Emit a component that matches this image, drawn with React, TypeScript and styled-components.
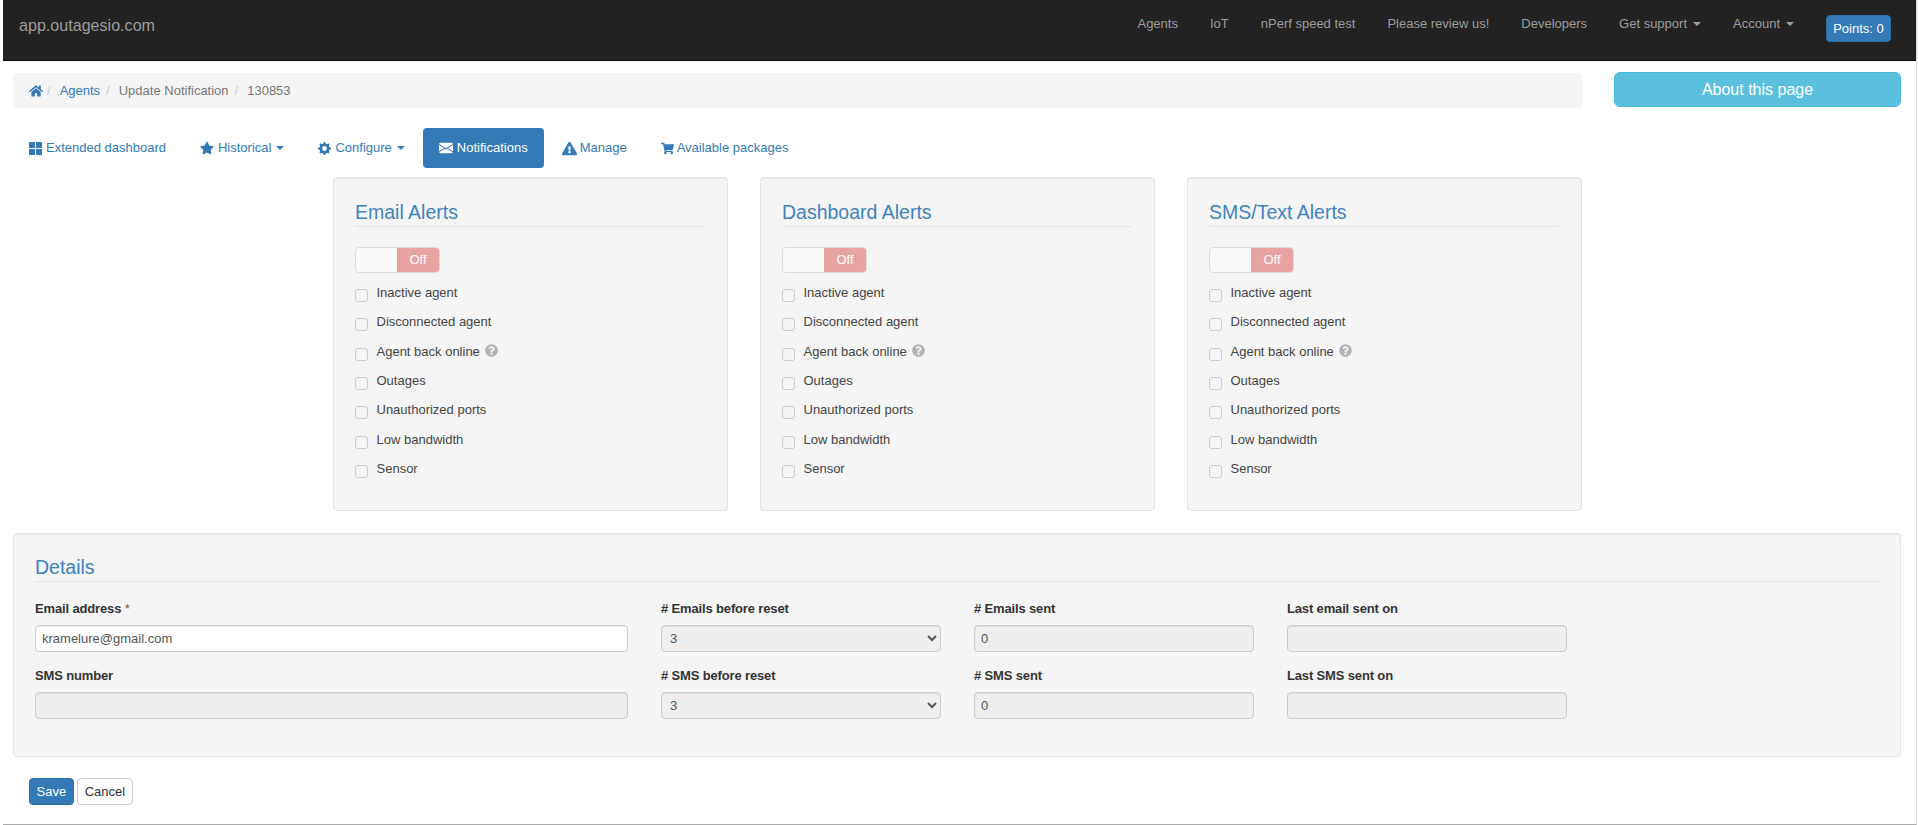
import { FC, ReactNode } from 'react'
import styled, { createGlobalStyle } from 'styled-components'
import { BsEnvelopeFill, BsGearFill } from 'react-icons/bs'
import { FaExclamationTriangle, FaHome, FaQuestionCircle, FaShoppingCart, FaStar } from 'react-icons/fa'

const blue = '#337ab7'

const GlobalStyle = createGlobalStyle`
    html, body {
        margin: 0;
        padding: 0;
        background: #fff;
    }
    body {
        font-family: "Liberation Sans", Arial, sans-serif;
        font-size: 13px;
        line-height: 18px;
        color: #333;
    }
    * {
        box-sizing: border-box;
    }
`

const Page = styled.div`
    margin-left: 3px;
    height: 825px;
    width: 1914px;
    border-right: 1px solid #d8d8d8;
    border-bottom: 1px solid #aaa;
    overflow: hidden;
`

const Navbar = styled.nav`
    height: 61px;
    background: #222;
    border-bottom: 1px solid #080808;
    display: flex;
    align-items: flex-start;
    justify-content: space-between;
    padding: 0 25px 0 16px;
`

const Brand = styled.div`
    color: #9d9d9d;
    font-size: 16.1px;
    line-height: 20px;
    margin-top: 15px;
`

const NavLinks = styled.div`
    display: flex;
    align-items: flex-start;
`

const NavLink = styled.div`
    color: #9d9d9d;
    padding: 15px 16px 0;
    display: flex;
    align-items: center;
    white-space: nowrap;
`

const Caret = styled.span`
    display: inline-block;
    margin-left: 6px;
    border-top: 4px solid currentColor;
    border-left: 4px solid transparent;
    border-right: 4px solid transparent;
`

const Points = styled.div`
    margin: 15px 0 0 16px;
    width: 65px;
    height: 27px;
    text-align: center;
    background: ${blue};
    border: 1px solid #2e6da4;
    border-radius: 4px;
    color: #fff;
    line-height: 25px;
    white-space: nowrap;
`

const Main = styled.main`
    padding: 12px 15px 0 10px;
`

const TopRow = styled.div`
    display: flex;
    justify-content: space-between;
    align-items: flex-start;
`

const Breadcrumb = styled.ol`
    list-style: none;
    width: 1569px;
    height: 35px;
    margin: 0;
    padding: 0 16px;
    background: #f5f5f5;
    border-radius: 4px;
    display: flex;
    align-items: center;
`

interface iCrumb {
    link?: boolean;
}

const Crumb = styled.li<iCrumb>`
    display: flex;
    align-items: center;
    color: ${props => props.link ? blue : '#777'};
    &:not(:last-child)::after {
        content: '/';
        color: #ccc;
        margin: 0 9px 0 6px;
    }
    &:first-child::after {
        margin-left: 4px;
    }
`

const AboutButton = styled.button`
    width: 287px;
    height: 35px;
    margin-top: -1px;
    background: #5bc0de;
    border: 1px solid #46b8da;
    border-radius: 6px;
    color: #fff;
    font-family: inherit;
    font-size: 16px;
`

const Tabs = styled.ul`
    list-style: none;
    margin: 20px 0 0;
    padding: 0;
    display: flex;
    gap: 2px;
`

interface iTab {
    active?: boolean;
    tight?: boolean;
}

const Tab = styled.li.withConfig({
    shouldForwardProp: prop => prop !== 'active' && prop !== 'tight',
})<iTab>`
    height: 40px;
    padding: 0 16px;
    display: flex;
    align-items: center;
    gap: ${props => props.tight ? '3px' : '4px'};
    border-radius: 4px;
    background: ${props => props.active ? blue : 'transparent'};
    color: ${props => props.active ? '#fff' : blue};
    white-space: nowrap;
    svg {
        flex-shrink: 0;
    }
    ${Caret} {
        margin-left: 1px;
    }
`

const AlertColumns = styled.div`
    margin: 9px 0 0 320px;
    display: flex;
    gap: 32px;
`

const Well = styled.section`
    background: #f5f5f5;
    border: 1px solid #e3e3e3;
    border-radius: 4px;
    box-shadow: inset 0 1px 1px rgba(0, 0, 0, .05);
`

const AlertCard = styled(Well)`
    width: 395px;
    height: 334px;
    padding: 24px 22px 0 21px;
`

const SectionTitle = styled.h4`
    margin: 0;
    font-size: 19.5px;
    font-weight: 400;
    line-height: 20px;
    color: #3f82bd;
    padding-bottom: 4px;
    border-bottom: 1px solid #e5e5e5;
`

const Toggle = styled.div`
    width: 85px;
    height: 26px;
    margin: 20px 0 11px;
    display: flex;
    border: 1px solid #ddd;
    border-radius: 4px;
    overflow: hidden;
    background: #fafafa;
`

const ToggleOff = styled.span`
    margin-left: auto;
    width: 42px;
    background: #e8a2a2;
    color: #fff;
    text-align: center;
    line-height: 23px;
`

const CheckRow = styled.label`
    height: 29.33px;
    display: flex;
    align-items: flex-start;
    gap: 8.5px;
    color: #444;
`

const Check = styled.input.attrs({ type: 'checkbox' })`
    appearance: none;
    width: 13px;
    height: 13px;
    margin: 5px 0 0;
    background: #f5f5f5;
    border: 1px solid #ccc;
    border-radius: 3px;
`

const HelpIcon = styled(FaQuestionCircle)`
    color: #b3b3b3;
    margin: 1px 0 0 -3px;
`

const DetailsWell = styled(Well)`
    margin-top: 22px;
    height: 224px;
    padding: 23px 20px 0 21px;
`

const DetailsGrid = styled.div`
    margin-top: 18px;
    display: grid;
    grid-template-columns: 593px 280px 280px 280px;
    column-gap: 33px;
    row-gap: 15px;
`

const Field = styled.div`
    display: flex;
    flex-direction: column;
    gap: 7px;
`

const FieldLabel = styled.label`
    font-weight: 700;
    color: #333;
    letter-spacing: -0.15px;
`

const Required = styled.span`
    font-weight: 400;
    color: #a94442;
`

const TextInput = styled.input`
    height: 27px;
    padding: 0 6px;
    font-family: inherit;
    font-size: 13px;
    color: #555;
    background: #fff;
    border: 1px solid #ccc;
    border-radius: 4px;
    box-shadow: inset 0 1px 1px rgba(0, 0, 0, .075);
    opacity: 1;
    &:disabled {
        background: #eee;
    }
`

const SelectInput = styled.select`
    height: 27px;
    padding: 0 4px;
    font-family: inherit;
    font-size: 13px;
    color: #555;
    background: #eee;
    border: 1px solid #ccc;
    border-radius: 4px;
    box-shadow: inset 0 1px 1px rgba(0, 0, 0, .075);
    opacity: 1;
`

const Actions = styled.div`
    margin: 21px 0 0 16px;
    display: flex;
    gap: 3.5px;
`

interface iButton {
    primary?: boolean;
}

const Button = styled.button.withConfig({
    shouldForwardProp: prop => prop !== 'primary',
})<iButton>`
    height: 27px;
    padding: 0 6.5px;
    font-family: inherit;
    font-size: 13px;
    border-radius: 4px;
    border: 1px solid ${props => props.primary ? '#2e6da4' : '#ccc'};
    background: ${props => props.primary ? blue : '#fff'};
    color: ${props => props.primary ? '#fff' : '#333'};
`

const alertRows = ['Inactive agent', 'Disconnected agent', 'Agent back online', 'Outages', 'Unauthorized ports', 'Low bandwidth', 'Sensor']

const TilesIcon: FC = () => (
    <svg width="13" height="13" viewBox="0 0 13 13" fill="currentColor">
        <rect width="6" height="6" rx="0.6" />
        <rect x="7" width="6" height="6" rx="0.6" />
        <rect y="7" width="6" height="6" rx="0.6" />
        <rect x="7" y="7" width="6" height="6" rx="0.6" />
    </svg>
)

const AlertPanel: FC<{ title: string }> = ({ title }) => (
    <AlertCard>
        <SectionTitle>{title}</SectionTitle>
        <Toggle><ToggleOff>Off</ToggleOff></Toggle>
        {alertRows.map(row => (
            <CheckRow key={row}>
                <Check />
                {row}
                {row === 'Agent back online' && <HelpIcon size={13} />}
            </CheckRow>
        ))}
    </AlertCard>
)

const LabeledField: FC<{ label: ReactNode; children: ReactNode }> = ({ label, children }) => (
    <Field>
        <FieldLabel>{label}</FieldLabel>
        {children}
    </Field>
)

const CountSelect: FC = () => (
    <SelectInput disabled defaultValue="3">
        <option>3</option>
    </SelectInput>
)

const App: FC = () => {
    return (
        <Page>
            <GlobalStyle />
            <Navbar>
                <Brand>app.outagesio.com</Brand>
                <NavLinks>
                    <NavLink>Agents</NavLink>
                    <NavLink>IoT</NavLink>
                    <NavLink>nPerf speed test</NavLink>
                    <NavLink>Please review us!</NavLink>
                    <NavLink>Developers</NavLink>
                    <NavLink>Get support<Caret /></NavLink>
                    <NavLink>Account<Caret /></NavLink>
                    <Points>Points: 0</Points>
                </NavLinks>
            </Navbar>
            <Main>
                <TopRow>
                    <Breadcrumb>
                        <Crumb link><FaHome size={14} /></Crumb>
                        <Crumb link>Agents</Crumb>
                        <Crumb>Update Notification</Crumb>
                        <Crumb>130853</Crumb>
                    </Breadcrumb>
                    <AboutButton>About this page</AboutButton>
                </TopRow>
                <Tabs>
                    <Tab><TilesIcon />Extended dashboard</Tab>
                    <Tab><FaStar size={14} />Historical<Caret /></Tab>
                    <Tab><BsGearFill size={13} />Configure<Caret /></Tab>
                    <Tab active><BsEnvelopeFill size={14} />Notifications</Tab>
                    <Tab tight><FaExclamationTriangle size={15} />Manage</Tab>
                    <Tab tight><FaShoppingCart size={13} />Available packages</Tab>
                </Tabs>
                <AlertColumns>
                    <AlertPanel title="Email Alerts" />
                    <AlertPanel title="Dashboard Alerts" />
                    <AlertPanel title="SMS/Text Alerts" />
                </AlertColumns>
                <DetailsWell>
                    <SectionTitle>Details</SectionTitle>
                    <DetailsGrid>
                        <LabeledField label={<>Email address <Required>*</Required></>}>
                            <TextInput defaultValue="kramelure@gmail.com" />
                        </LabeledField>
                        <LabeledField label="# Emails before reset"><CountSelect /></LabeledField>
                        <LabeledField label="# Emails sent"><TextInput disabled defaultValue="0" /></LabeledField>
                        <LabeledField label="Last email sent on"><TextInput disabled /></LabeledField>
                        <LabeledField label="SMS number"><TextInput disabled /></LabeledField>
                        <LabeledField label="# SMS before reset"><CountSelect /></LabeledField>
                        <LabeledField label="# SMS sent"><TextInput disabled defaultValue="0" /></LabeledField>
                        <LabeledField label="Last SMS sent on"><TextInput disabled /></LabeledField>
                    </DetailsGrid>
                </DetailsWell>
                <Actions>
                    <Button primary>Save</Button>
                    <Button>Cancel</Button>
                </Actions>
            </Main>
        </Page>
    )
}

export default App
